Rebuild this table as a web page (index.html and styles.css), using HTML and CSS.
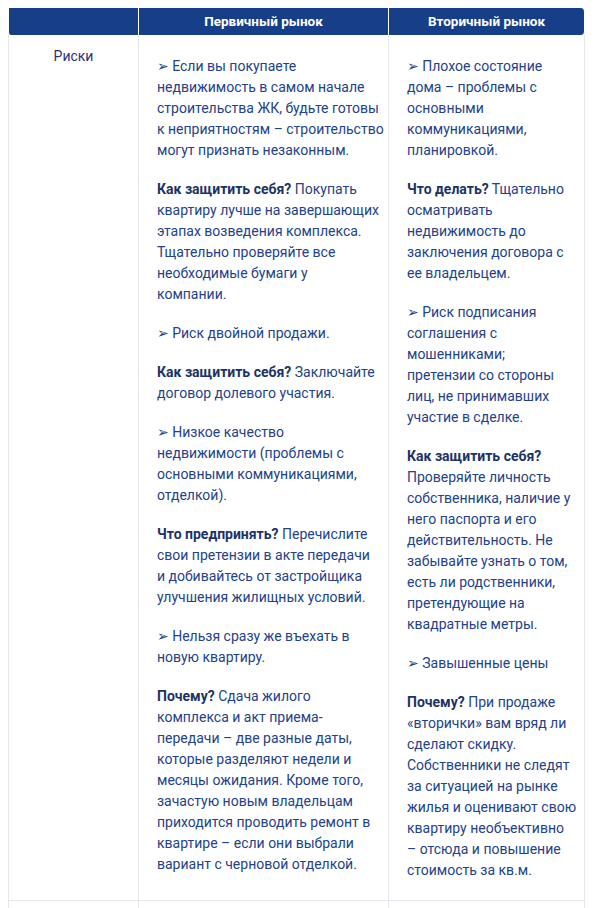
FILE: index.html
```html
<!DOCTYPE html>
<html lang="ru">
<head>
<meta charset="utf-8">
<title>Первичный и вторичный рынок</title>
<link rel="stylesheet" href="styles.css">
</head>
<body>
<table class="compare">
  <thead>
    <tr>
      <th class="col-label"></th>
      <th class="col-primary">Первичный рынок</th>
      <th class="col-secondary">Вторичный рынок</th>
    </tr>
  </thead>
  <tbody>
    <tr>
      <td class="label">Риски</td>
      <td class="text">
        <p><span class="mark">➢</span> Если вы покупаете<br>недвижимость в самом начале<br>строительства ЖК, будьте готовы<br>к неприятностям – строительство<br>могут признать незаконным.</p>
        <p><b>Как защитить себя?</b> Покупать<br>квартиру лучше на завершающих<br>этапах возведения комплекса.<br>Тщательно проверяйте все<br>необходимые бумаги у<br>компании.</p>
        <p><span class="mark">➢</span> Риск двойной продажи.</p>
        <p><b>Как защитить себя?</b> Заключайте<br>договор долевого участия.</p>
        <p><span class="mark">➢</span> Низкое качество<br>недвижимости (проблемы с<br>основными коммуникациями,<br>отделкой).</p>
        <p><b>Что предпринять?</b> Перечислите<br>свои претензии в акте передачи<br>и добивайтесь от застройщика<br>улучшения жилищных условий.</p>
        <p><span class="mark">➢</span> Нельзя сразу же въехать в<br>новую квартиру.</p>
        <p><b>Почему?</b> Сдача жилого<br>комплекса и акт приема-<br>передачи – две разные даты,<br>которые разделяют недели и<br>месяцы ожидания. Кроме того,<br>зачастую новым владельцам<br>приходится проводить ремонт в<br>квартире – если они выбрали<br>вариант с черновой отделкой.</p>
      </td>
      <td class="text">
        <p><span class="mark">➢</span> Плохое состояние<br>дома – проблемы с<br>основными<br>коммуникациями,<br>планировкой.</p>
        <p><b>Что делать?</b> Тщательно<br>осматривать<br>недвижимость до<br>заключения договора с<br>ее владельцем.</p>
        <p><span class="mark">➢</span> Риск подписания<br>соглашения с<br>мошенниками;<br>претензии со стороны<br>лиц, не принимавших<br>участие в сделке.</p>
        <p><b>Как защитить себя?</b><br>Проверяйте личность<br>собственника, наличие у<br>него паспорта и его<br>действительность. Не<br>забывайте узнать о том,<br>есть ли родственники,<br>претендующие на<br>квадратные метры.</p>
        <p><span class="mark">➢</span> Завышенные цены</p>
        <p><b>Почему?</b> При продаже<br>«вторички» вам вряд ли<br>сделают скидку.<br>Собственники не следят<br>за ситуацией на рынке<br>жилья и оценивают свою<br>квартиру необъективно<br>– отсюда и повышение<br>стоимость за кв.м.</p>
      </td>
    </tr>
    <tr>
      <td class="label">Сроки</td>
      <td class="text"><p>Зависят от темпов строительства.</p></td>
      <td class="text"><p>Можно въехать сразу после сделки.</p></td>
    </tr>
  </tbody>
</table>
</body>
</html>
```

FILE: styles.css
```css
html, body {
  margin: 0;
  padding: 0;
  background: #ffffff;
}

body {
  padding: 8px;
  font-family: Roboto, "Noto Sans", sans-serif;
  font-size: 14px;
  line-height: 21px;
  color: #22428a;
}

.compare {
  width: 577px;
  border-collapse: separate;
  border-spacing: 0;
  table-layout: fixed;
}

.col-label { width: 129px; }
.col-primary { width: 249px; }
.col-secondary { width: 195px; }

.compare th {
  background: #163f88;
  color: #ffffff;
  font-size: 13.5px;
  font-weight: 700;
  line-height: 17px;
  height: 17px;
  padding: 5px 0;
  text-align: center;
  border-left: 1px solid #ffffff;
}

.compare th.col-label {
  border-bottom-left-radius: 3px;
}

.compare th.col-secondary {
  border-right: 1px solid #ffffff;
  border-top-right-radius: 4px;
  border-bottom-right-radius: 4px;
}

.compare td {
  vertical-align: top;
  border-left: 1px solid #e6e6ef;
  border-bottom: 1px solid #e6e6ef;
  padding: 11px 18px 1px;
}

.compare td:last-child {
  border-right: 1px solid #e6e6ef;
}

.compare td.label {
  text-align: center;
  color: #2e3275;
  padding-left: 0;
  padding-right: 0;
}

.text p {
  margin: 10px 0 18px;
  white-space: nowrap;
}

.text b {
  color: #1c3366;
  font-weight: 700;
}

.mark {
  font-family: "DejaVu Sans", sans-serif;
  font-size: 14px;
  line-height: 1;
}
```
